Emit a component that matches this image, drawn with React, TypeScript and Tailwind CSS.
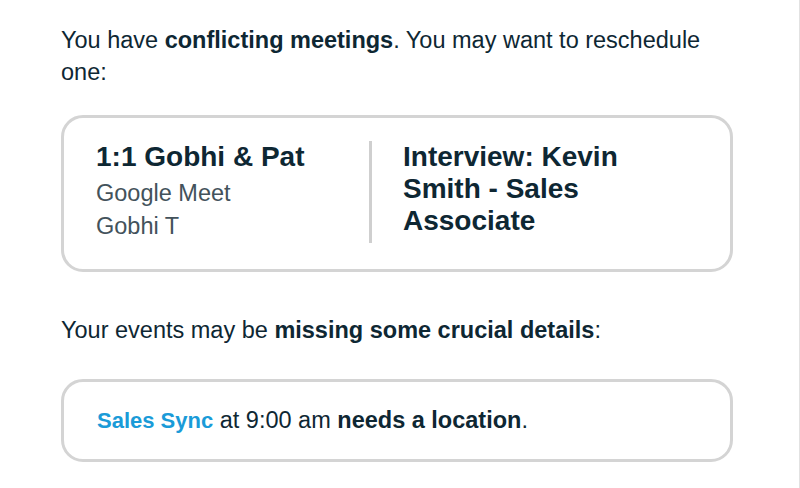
import React from 'react';

const ink = 'text-[#0e2733]';

const ConflictCard: React.FC = () => (
  <div className="mt-[27px] w-[672px] rounded-[22px] border-[3px] border-[#d4d4d4] px-[32px] pt-[23px] pb-[26px]">
    <div className="flex">
      <div className="w-[273px]">
        <div className={`text-[28px] font-bold leading-[32px] ${ink}`}>1:1 Gobhi &amp; Pat</div>
        <div className="mt-[4px] text-[23.5px] leading-[33px] text-[#43525b]">Google Meet</div>
        <div className="text-[23.5px] leading-[33px] text-[#43525b]">Gobhi T</div>
      </div>
      <div className="w-[3px] bg-[#cfcfcf]" />
      <div className={`ml-[31px] w-[272px] text-[28px] font-bold leading-[32px] ${ink}`}>
        Interview: Kevin Smith - Sales Associate
      </div>
    </div>
  </div>
);

export default function App() {
  return (
    <div
      className="h-[488px] w-[800px] overflow-hidden border-r border-[#e2e2e2] bg-white pl-[61px] pt-[24px]"
      style={{ fontFamily: '"Liberation Sans", Arial, sans-serif' }}
    >
      <p className={`w-[660px] text-[23.5px] leading-[32px] ${ink}`}>
        You have <b>conflicting meetings</b>. You may want to reschedule one:
      </p>

      <ConflictCard />

      <p className={`mt-[42px] text-[23.5px] leading-[32px] ${ink}`}>
        Your events may be <b>missing some crucial details</b>:
      </p>

      <div className="mt-[33px] w-[672px] rounded-[22px] border-[3px] border-[#d4d4d4] px-[33px] py-[22px]">
        <div className={`text-[23.5px] leading-[32px] ${ink}`}>
          <b className="text-[22px] text-[#1a9bd8]">Sales Sync</b> at 9:00 am <b>needs a location</b>.
        </div>
      </div>
    </div>
  );
}
